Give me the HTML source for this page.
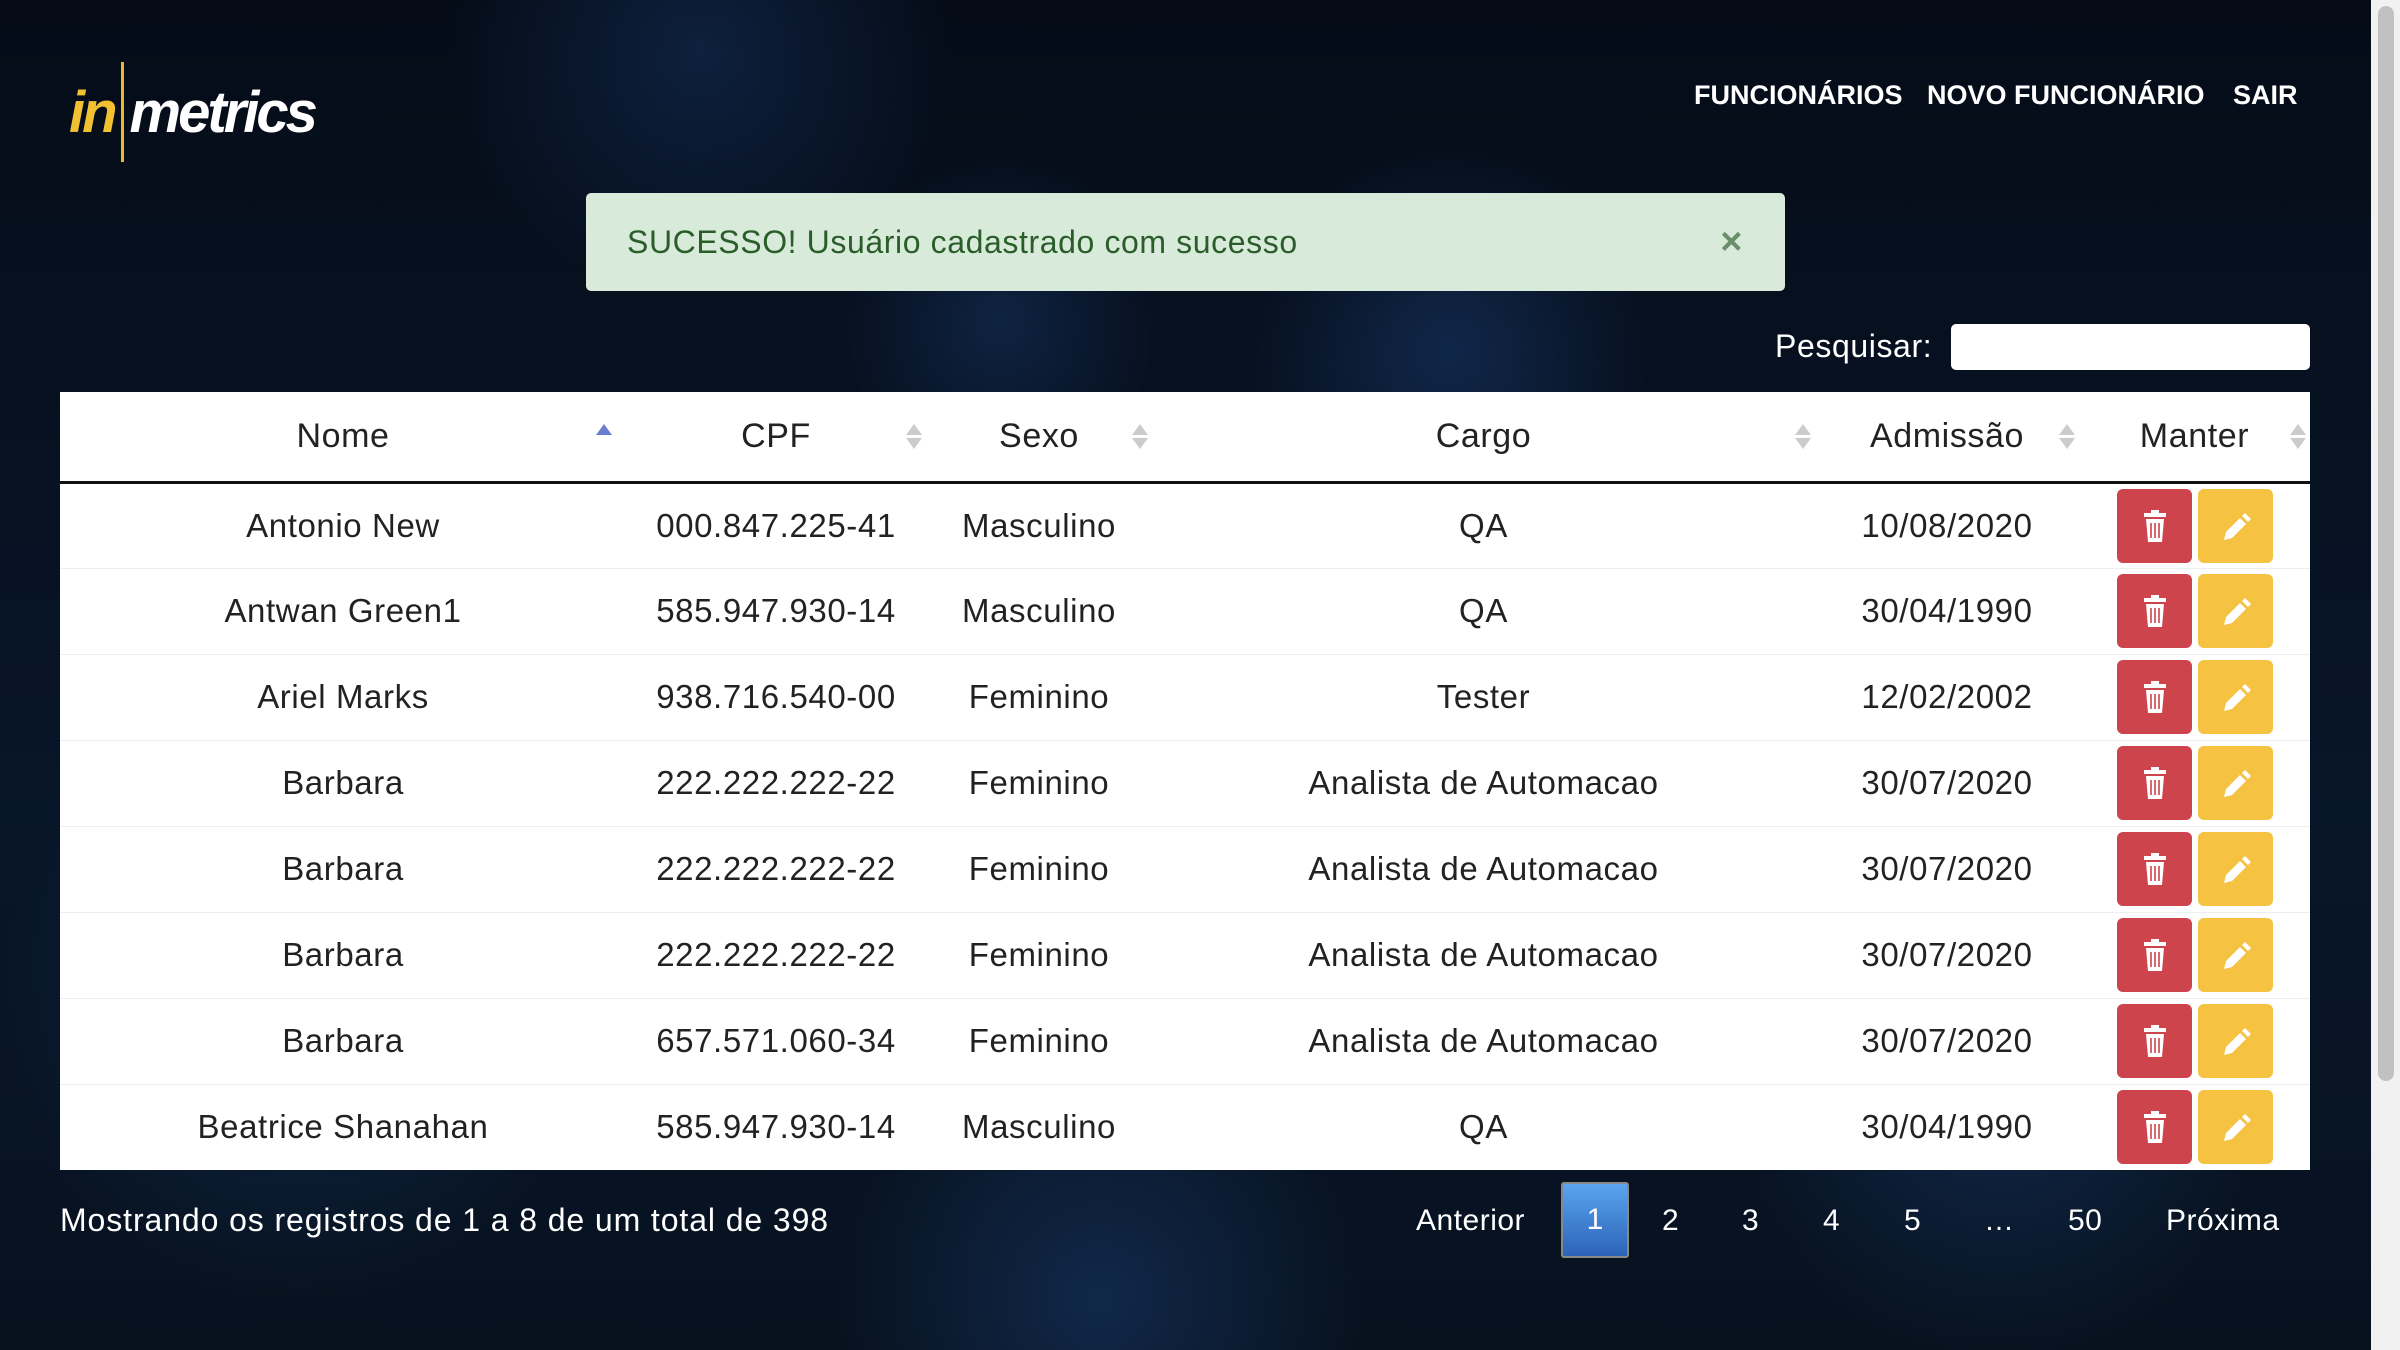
<!DOCTYPE html><html><head><meta charset="utf-8"><style>
*{margin:0;padding:0;box-sizing:border-box}
body{width:2400px;height:1350px;overflow:hidden;font-family:"Liberation Sans",sans-serif;position:relative;
background:
radial-gradient(circle at 1450px 350px,rgba(40,90,170,.3),transparent 200px),
radial-gradient(circle at 1000px 320px,rgba(40,90,170,.25),transparent 160px),
radial-gradient(circle at 1100px 1300px,rgba(40,90,170,.3),transparent 260px),
radial-gradient(circle at 2000px 1100px,rgba(40,90,170,.25),transparent 260px),
radial-gradient(circle at 300px 1000px,rgba(40,90,170,.25),transparent 300px),
radial-gradient(circle at 700px 50px,rgba(40,90,170,.25),transparent 250px),
linear-gradient(180deg,#050c18,#081629 60%,#07121f);}
.a{position:absolute}
.nav{color:#fff;font-weight:bold;font-size:27px;top:80px}
.alert{left:586px;top:193px;width:1199px;height:98px;background:#d8ead9;border-radius:5px;color:#2b5d2b;font-size:32px;line-height:98px;padding-left:41px;letter-spacing:.6px}
table{position:absolute;left:60px;top:392px;width:2250px;border-collapse:collapse;background:#fff;font-size:33px;color:#222;letter-spacing:.6px}
th{height:90px;font-weight:normal;font-size:34px;border-bottom:3px solid #111;position:relative}
td{height:86px;text-align:center;border-top:1px solid #eee}
.s{position:absolute;right:12px;top:32px;width:0;height:0}
.s:before,.s:after{content:"";position:absolute;left:-8px;border-left:8px solid transparent;border-right:8px solid transparent}
.s:before{top:0;border-bottom:11px solid #ccc}.s:after{top:14px;border-top:11px solid #ccc}
.b{display:inline-block;width:75px;height:74px;border-radius:6px;vertical-align:middle;position:relative}
.b svg{position:absolute;left:20px;top:19px}
.d{background:#cd444c;margin-right:6px}.e{background:#f5c242}
.pg{color:#fff;font-size:30px;top:1204px;letter-spacing:.5px}
</style></head><body>
<div class="a" style="left:69px;top:62px;font-size:58px;font-weight:bold;font-style:italic;letter-spacing:-3px"><span style="color:#f2c132">in</span><span style="display:inline-block;width:3px;height:100px;background:#e8b830;vertical-align:-30px;margin:0 6px"></span><span style="color:#fff">metrics</span></div>
<div class="a nav" style="left:1694px">FUNCIONÁRIOS</div>
<div class="a nav" style="left:1927px">NOVO FUNCIONÁRIO</div>
<div class="a nav" style="left:2233px">SAIR</div>
<div class="a alert">SUCESSO! Usuário cadastrado com sucesso<span style="position:absolute;right:42px;color:#6a8e6a;font-weight:bold;font-size:38px">×</span></div>
<div class="a" style="left:1775px;top:328px;color:#fff;font-size:32px;letter-spacing:.6px">Pesquisar:</div>
<div class="a" style="left:1951px;top:324px;width:359px;height:46px;background:#fff;border-radius:5px"></div>
<table>
<tr><th style="width:566px">Nome<span style="position:absolute;left:536px;top:32px;border-left:8px solid transparent;border-right:8px solid transparent;border-bottom:11px solid #6b7fd0"></span></th><th style="width:300px">CPF<span class="s"></span></th><th style="width:226px">Sexo<span class="s"></span></th><th style="width:663px">Cargo<span class="s"></span></th><th style="width:264px">Admissão<span class="s"></span></th><th>Manter<span class="s"></span></th></tr>
<tr><td>Antonio New</td><td>000.847.225-41</td><td>Masculino</td><td>QA</td><td>10/08/2020</td><td>B</td></tr>
<tr><td>Antwan Green1</td><td>585.947.930-14</td><td>Masculino</td><td>QA</td><td>30/04/1990</td><td>B</td></tr>
<tr><td>Ariel Marks</td><td>938.716.540-00</td><td>Feminino</td><td>Tester</td><td>12/02/2002</td><td>B</td></tr>
<tr><td>Barbara</td><td>222.222.222-22</td><td>Feminino</td><td>Analista de Automacao</td><td>30/07/2020</td><td>B</td></tr>
<tr><td>Barbara</td><td>222.222.222-22</td><td>Feminino</td><td>Analista de Automacao</td><td>30/07/2020</td><td>B</td></tr>
<tr><td>Barbara</td><td>222.222.222-22</td><td>Feminino</td><td>Analista de Automacao</td><td>30/07/2020</td><td>B</td></tr>
<tr><td>Barbara</td><td>657.571.060-34</td><td>Feminino</td><td>Analista de Automacao</td><td>30/07/2020</td><td>B</td></tr>
<tr><td>Beatrice Shanahan</td><td>585.947.930-14</td><td>Masculino</td><td>QA</td><td>30/04/1990</td><td>B</td></tr>
</table>
<div class="a" style="left:60px;top:1202px;color:#fff;font-size:32px;letter-spacing:.9px">Mostrando os registros de 1 a 8 de um total de 398</div>
<div class="a pg" style="left:1416px">Anterior</div>
<div class="a" style="left:1561px;top:1182px;width:68px;height:76px;border:2px solid #888;border-radius:3px;background:linear-gradient(#5aa4f0,#2c63b8);color:#fff;font-size:30px;text-align:center;line-height:72px">1</div>
<div class="a pg" style="left:1662px">2</div><div class="a pg" style="left:1742px">3</div><div class="a pg" style="left:1823px">4</div><div class="a pg" style="left:1904px">5</div><div class="a pg" style="left:1984px">…</div><div class="a pg" style="left:2068px">50</div><div class="a pg" style="left:2166px">Próxima</div>
<div class="a" style="left:2371px;top:0;width:29px;height:1350px;background:#f1f1f1"><div style="margin:6px 0 0 7px;width:16px;height:1075px;background:#c1c1c1;border-radius:8px"></div></div>
<script>
var B='<span class="b d"><svg width="36" height="36" viewBox="0 0 36 36"><rect x="7" y="5" width="22" height="4" fill="#fff"/><rect x="14" y="2" width="8" height="4" fill="#fff"/><path d="M9 11h18l-2 23h-14z" fill="#fff"/><path d="M14 15v15M18 15v15M22 15v15" stroke="#cd444c" stroke-width="1.6"/></svg></span><span class="b e"><svg width="36" height="36" viewBox="0 0 36 36"><path d="M6 32l2-8 14-14 6 6-14 14z" fill="#fff"/><path d="M24 8l3-3 6 6-3 3z" fill="#fff"/></svg></span>';
document.querySelectorAll('td').forEach(function(t){if(t.textContent=='B')t.innerHTML=B;});
</script>
</body></html>
